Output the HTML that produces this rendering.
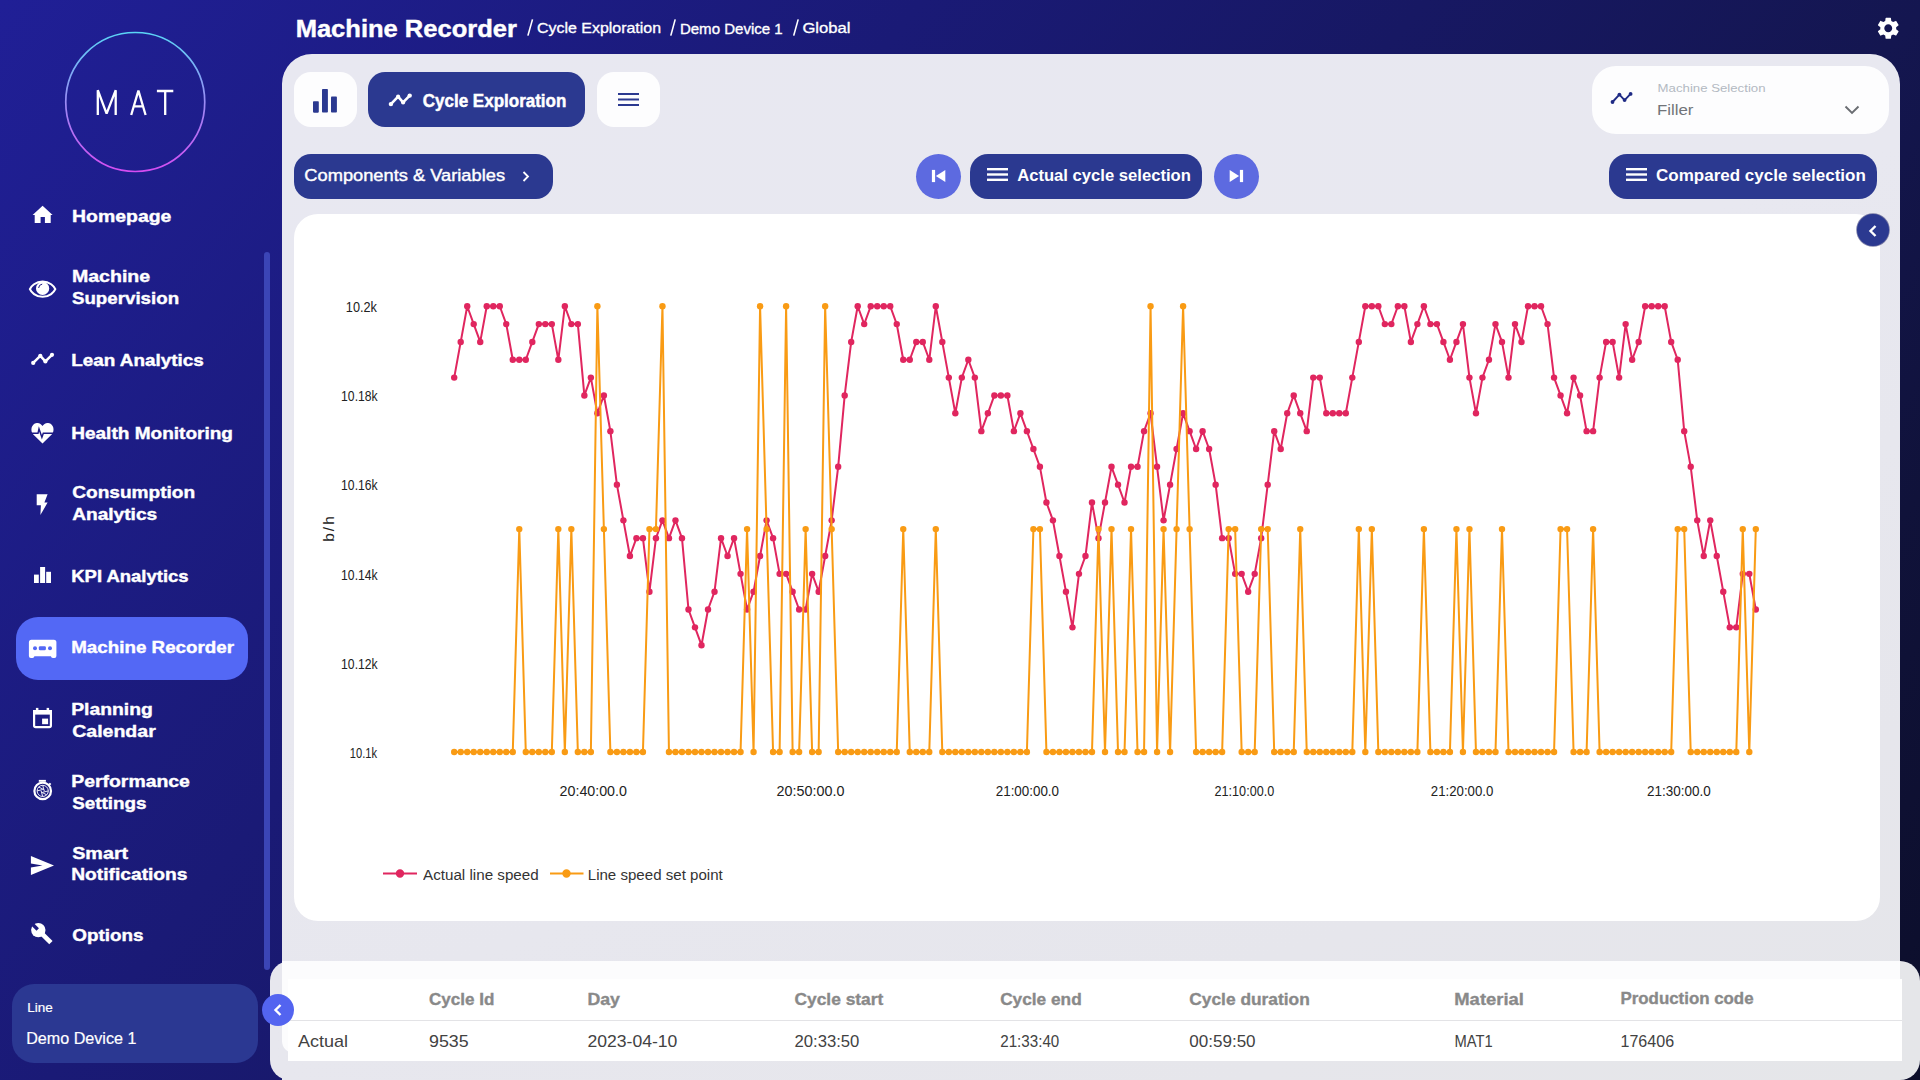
<!DOCTYPE html>
<html><head><meta charset="utf-8">
<style>
*{box-sizing:border-box;margin:0;padding:0}
html,body{width:1920px;height:1080px;overflow:hidden}
body{position:relative;font-family:"Liberation Sans",sans-serif;
background:linear-gradient(129deg,rgb(32,31,150) 0%,rgb(26,26,118) 33%,rgb(20,22,80) 69%,rgb(16,18,58) 83%,rgb(12,14,42) 100%);}
.abs{position:absolute}
.t{position:absolute;white-space:nowrap;line-height:1}
/* sidebar */
.logo{left:65px;top:32px;width:140px;height:140px}
.nav{color:#fff;font-weight:bold;font-size:17.5px;letter-spacing:0.35px}
.ico{position:absolute}
.active{left:16px;top:617px;width:232px;height:63px;border-radius:22px;background:#5368f5}
.scroll{left:264px;top:252px;width:6px;height:718px;border-radius:3px;background:#3b45b6}
.linebox{left:12px;top:984px;width:246px;height:79px;border-radius:22px;background:#2b3892}
/* header */
.title{left:297px;top:13px;color:#fff;font-weight:bold;font-size:23.5px;letter-spacing:0.2px}
.crumb{color:#fff;font-size:15px;top:20px}
/* main panel */
.panel{left:282px;top:54px;width:1618px;height:1100px;border-radius:30px 30px 0 0;background:linear-gradient(160deg,#e8e8f1 0%,#e8e8f0 40%,#e6e6ec 75%,#e5e6e9 100%)}
.wbtn{background:#fdfdfe;border-radius:17px}
.bbtn{background:#2b3990;border-radius:17px;color:#fff}
.circ{border-radius:50%;background:#5d6ae0}
.card{left:294px;top:214px;width:1586px;height:707px;border-radius:24px;background:#fff}
.ylab{color:#222;font-size:13.5px;text-align:right;width:60px}
.xlab{color:#222;font-size:13.5px;text-align:center;width:100px}
.chart{position:absolute;left:0;top:0}
.bottom{left:270px;top:961px;width:1650px;height:119px;border-radius:20px;background:linear-gradient(90deg,#e7e7ee 0%,#e6e6eb 60%,#e5e6e9 100%)}
.th{color:#898989;font-weight:bold;font-size:16px}
.td{color:#363636;font-size:16px}
</style></head>
<body>
<!-- SIDEBAR -->
<svg class="abs" style="left:0;top:0" width="300" height="1080" viewBox="0 0 300 1080">
<defs><linearGradient id="lg" x1="0" y1="32" x2="0" y2="172" gradientUnits="userSpaceOnUse"><stop offset="0" stop-color="#5ad6f6"/><stop offset="0.5" stop-color="#9a8cf4"/><stop offset="1" stop-color="#d64cf2"/></linearGradient></defs>
<circle cx="135.25" cy="102" r="69.5" fill="none" stroke="url(#lg)" stroke-width="1.7"/>
<g fill="none" stroke="#fff" stroke-width="2.3" stroke-linejoin="miter" stroke-miterlimit="10">
<path d="M97.8 115 V90.2 L106.6 113.6 L115.7 90.2 V115" stroke-miterlimit="1.2"/>
<path d="M131.2 115 L138.4 90.6 L145.6 115 M134.2 106.3 H142.6" stroke-miterlimit="1.2"/>
<path d="M156.9 91 H173.3 M165.2 91 V115"/>
</g>
</svg>

<div class="abs active"></div>
<div class="abs scroll"></div>

<svg class="abs" style="left:0;top:0" width="70" height="1080" viewBox="0 0 70 1080">
<!-- home -->
<path d="M42.6 205.7 L52.6 214.9 H50.7 V223 H44.9 V216.9 H40.6 V223 H34.7 V214.9 H32.6 Z" fill="#fff"/>
<!-- eye -->
<path d="M42.6 281.6 C35.5 281.6 31.2 286.2 29.9 289.1 C31.2 292.1 35.5 296.8 42.6 296.8 C49.7 296.8 54 292.1 55.3 289.1 C54 286.2 49.7 281.6 42.6 281.6 Z" fill="none" stroke="#fff" stroke-width="2.1"/>
<circle cx="42.6" cy="288.4" r="6.6" fill="#fff"/>
<path d="M38.6 288 A4.3 4.3 0 0 1 42.2 284.1" fill="none" stroke="#1e1b86" stroke-width="1"/>
<!-- lean -->
<g fill="#fff"><polyline points="33.2,362.9 40.3,355.8 45.4,361.4 52,354.8" fill="none" stroke="#fff" stroke-width="2.5" stroke-linejoin="round"/>
<circle cx="33.2" cy="362.9" r="2.1"/><circle cx="40.3" cy="355.8" r="2.1"/><circle cx="45.4" cy="361.4" r="2.1"/><circle cx="52" cy="354.8" r="2.1"/></g>
<!-- heart -->
<path d="M42.5 443.4 L33.3 434.6 C30.2 431.5 30.8 423.8 36.8 423.1 C39.5 422.8 41.4 424.5 42.5 426 C43.6 424.5 45.5 422.8 48.2 423.1 C54.2 423.8 54.8 431.5 51.7 434.6 Z" fill="#fff"/>
<polyline points="30,433.3 38,433.3 39,428.9 41.9,437.2 43.3,433.3 55,433.3" fill="none" stroke="#1e1b84" stroke-width="1.5" stroke-linejoin="miter"/>
<!-- bolt -->
<path d="M36.7 494.2 H47.6 L44.4 502.6 H47.6 L40.4 515 L40.9 505.2 H36.7 Z" fill="#fff"/>
<!-- kpi -->
<g fill="#fff"><rect x="34" y="574.6" width="4.8" height="8.4"/><rect x="40.1" y="567" width="5" height="16"/><rect x="46.2" y="571.8" width="4.8" height="11.2"/></g>
<!-- cassette -->
<path d="M31.4 639.7 H53.9 A2.5 2.5 0 0 1 56.4 642.2 V656 A2 2 0 0 1 54.4 658 H52.9 A2 2 0 0 1 50.9 656.3 H34.4 A2 2 0 0 1 32.4 658 H30.9 A2 2 0 0 1 28.9 656 V642.2 A2.5 2.5 0 0 1 31.4 639.7 Z" fill="#fff"/>
<g fill="#5368f5"><circle cx="35" cy="648.3" r="2"/><rect x="38.8" y="646.3" width="7.1" height="4" rx="1.3"/><circle cx="50" cy="648.3" r="2"/></g>
<!-- calendar -->
<rect x="34.1" y="711.2" width="16.8" height="16" rx="1.6" fill="none" stroke="#fff" stroke-width="2.2"/>
<rect x="33" y="710" width="19" height="4.6" fill="#fff"/>
<rect x="35.9" y="707.9" width="2.5" height="3" fill="#fff"/><rect x="46.6" y="707.9" width="2.5" height="3" fill="#fff"/>
<rect x="42.1" y="718.6" width="6" height="5.6" fill="#fff"/>
<!-- stopwatch -->
<rect x="38.8" y="779.9" width="7.1" height="1.9" fill="#fff"/>
<circle cx="42.7" cy="790.9" r="8.3" fill="none" stroke="#fff" stroke-width="2.2"/>
<path d="M49.2 784.8 L50.6 783.4" stroke="#fff" stroke-width="2"/>
<circle cx="42.7" cy="790.9" r="5.6" fill="none" stroke="#fff" stroke-width="0.9"/>
<g stroke="#fff" stroke-width="0.9"><path d="M42.7 785.3 L44.3 791 M48.3 790.9 L42.7 792.3 M42.7 796.5 L41.1 790.8 M37.1 790.9 L42.7 789.5 M38.7 787 L43.8 789.6 M46.7 794.8 L41.6 792.2"/></g>
<!-- send -->
<path d="M30.9 856 L54 865.5 L30.9 874.9 L30.9 867.4 L42.5 865.5 L30.9 863.6 Z" fill="#fff"/>
<!-- wrench -->
<line x1="38.3" y1="930.1" x2="50.9" y2="942.7" stroke="#fff" stroke-width="4.7"/>
<circle cx="38.3" cy="930.1" r="7.2" fill="#fff"/>
<g transform="translate(38.3 930.1) rotate(45)"><rect x="-9" y="-1.7" width="8.2" height="3.4" fill="#1d1a80"/></g>
</svg>

<div class="abs linebox"></div>

<!-- HEADER -->
<svg class="abs" style="left:0;top:0" width="900" height="50" viewBox="0 0 900 50"><g stroke="#fff" stroke-width="1.6" stroke-linecap="butt"><line x1="527.9" y1="35.6" x2="532.5" y2="19.4"/><line x1="670.8" y1="35.6" x2="675.2" y2="19.4"/><line x1="793.7" y1="35.6" x2="798.2" y2="19.4"/></g></svg>
<svg class="abs" style="left:1875.2px;top:15.1px" width="26.5" height="26.5" viewBox="0 0 24 24"><path fill="#fff" d="M19.14 12.94c.04-.3.06-.61.06-.94 0-.32-.02-.64-.07-.94l2.03-1.58a.49.49 0 0 0 .12-.61l-1.92-3.32a.488.488 0 0 0-.59-.22l-2.39.96c-.5-.38-1.03-.7-1.62-.94l-.36-2.54a.484.484 0 0 0-.48-.41h-3.84c-.24 0-.43.17-.47.41l-.36 2.54c-.59.24-1.13.57-1.62.94l-2.39-.96c-.22-.08-.47 0-.59.22L2.74 8.87c-.12.21-.08.47.12.61l2.03 1.58c-.05.3-.09.63-.09.94s.02.64.07.94l-2.03 1.58a.49.49 0 0 0-.12.61l1.92 3.32c.12.22.37.29.59.22l2.39-.96c.5.38 1.03.7 1.62.94l.36 2.54c.05.24.24.41.48.41h3.84c.24 0 .44-.17.47-.41l.36-2.54c.59-.24 1.13-.56 1.62-.94l2.39.96c.22.08.47 0 .59-.22l1.92-3.32c.12-.22.07-.47-.12-.61l-2.01-1.58zM12 15.6c-1.98 0-3.6-1.62-3.6-3.6s1.62-3.6 3.6-3.6 3.6 1.62 3.6 3.6-1.62 3.6-3.6 3.6z"/></svg>

<!-- MAIN PANEL -->
<div class="abs panel"></div>

<div class="abs wbtn" style="left:294px;top:72px;width:63px;height:55px"></div>
<svg class="abs" style="left:0;top:0" width="700" height="130" viewBox="0 0 700 130"><g fill="#2b3990"><rect x="313" y="101.25" width="5.8" height="11.4" rx="0.8"/><rect x="322" y="89" width="5.9" height="23.6" rx="0.8"/><rect x="331" y="96.6" width="5.9" height="16" rx="0.8"/></g></svg>
<div class="abs bbtn" style="left:368px;top:72px;width:217px;height:55px"></div>
<svg class="abs" style="left:0;top:0" width="700" height="130" viewBox="0 0 700 130"><g fill="#fff"><polyline points="390.9,104.1 398.1,96.6 403.1,102.4 409.7,95.6" fill="none" stroke="#fff" stroke-width="2.6" stroke-linejoin="round"/><circle cx="390.9" cy="104.1" r="2.2"/><circle cx="398.1" cy="96.6" r="2.1"/><circle cx="403.1" cy="102.4" r="2.1"/><circle cx="409.7" cy="95.6" r="2.2"/></g></svg>
<div class="abs wbtn" style="left:597px;top:72px;width:63px;height:55px"></div>
<svg class="abs" style="left:618px;top:93px" width="21" height="13" viewBox="0 0 21 13"><rect x="0" y="0" width="21" height="2" fill="#2b3990"/><rect x="0" y="5.5" width="21" height="2" fill="#2b3990"/><rect x="0" y="11" width="21" height="2" fill="#2b3990"/></svg>

<div class="abs bbtn" style="left:294px;top:154px;width:259px;height:45px"></div>
<svg class="abs" style="left:522px;top:171px" width="8" height="11" viewBox="0 0 8 11"><polyline points="1.5,1 6,5.5 1.5,10" fill="none" stroke="#fff" stroke-width="1.8"/></svg>

<div class="abs circ" style="left:916px;top:154px;width:45px;height:45px"></div>
<svg class="abs" style="left:900px;top:150px" width="50" height="50" viewBox="900 150 50 50"><rect x="931.9" y="169.9" width="3.2" height="12.2" fill="#fff"/><path d="M945.3 169.9 V182.1 L935.9 176 Z" fill="#fff"/></svg>
<div class="abs bbtn" style="left:970px;top:154px;width:232px;height:45px;border-radius:18px"></div>
<svg class="abs" style="left:987px;top:168px" width="21" height="13" viewBox="0 0 21 13"><rect x="0" y="0" width="21" height="2.4" fill="#fff"/><rect x="0" y="5.3" width="21" height="2.4" fill="#fff"/><rect x="0" y="10.6" width="21" height="2.4" fill="#fff"/></svg>
<div class="abs circ" style="left:1214px;top:154px;width:45px;height:45px"></div>
<svg class="abs" style="left:1200px;top:150px" width="50" height="50" viewBox="1200 150 50 50"><path d="M1229.7 169.9 V182.1 L1239.1 176 Z" fill="#fff"/><rect x="1239.9" y="169.9" width="3.2" height="12.2" fill="#fff"/></svg>

<div class="abs wbtn" style="left:1592px;top:66px;width:297px;height:68px;border-radius:24px"></div>
<svg class="abs" style="left:1600px;top:80px" width="40" height="30" viewBox="1600 80 40 30"><g fill="#1f2b85"><polyline points="1612.5,102 1619.4,94.6 1624.6,100.1 1630.6,93.9" fill="none" stroke="#1f2b85" stroke-width="1.9" stroke-linejoin="round"/><circle cx="1612.5" cy="102" r="1.9"/><circle cx="1619.4" cy="94.6" r="1.9"/><circle cx="1624.6" cy="100.1" r="1.9"/><circle cx="1630.6" cy="93.9" r="1.9"/></g></svg>
<svg class="abs" style="left:1844px;top:104px" width="16" height="11" viewBox="0 0 16 11"><polyline points="1.5,2.5 8,9 14.5,2.5" fill="none" stroke="#6a6d72" stroke-width="1.9"/></svg>

<div class="abs bbtn" style="left:1609px;top:154px;width:268px;height:45px;border-radius:18px"></div>
<svg class="abs" style="left:1626px;top:168px" width="21" height="13" viewBox="0 0 21 13"><rect x="0" y="0" width="21" height="2.4" fill="#fff"/><rect x="0" y="5.3" width="21" height="2.4" fill="#fff"/><rect x="0" y="10.6" width="21" height="2.4" fill="#fff"/></svg>

<!-- CHART CARD -->
<div class="abs card"></div>
<div class="abs" style="left:1857px;top:214px;width:32px;height:32px;border-radius:50%;background:#2b3990;box-shadow:0 0 0 0.8px rgba(25,30,100,0.55)"></div>
<svg class="abs" style="left:1867px;top:224px" width="12" height="14" viewBox="0 0 12 14"><polyline points="8.5,2 3.5,7 8.5,12" fill="none" stroke="#fff" stroke-width="2.4"/></svg>




<svg class="chart" width="1920" height="1080" viewBox="0 0 1920 1080">
<g fill="none" stroke="#e0265f" stroke-width="2" stroke-linejoin="round"><polyline points="454.20,377.61 460.71,341.93 467.22,306.25 473.72,324.09 480.23,341.93 486.74,306.25 493.25,306.25 499.76,306.25 506.26,324.09 512.77,359.77 519.28,359.77 525.79,359.77 532.30,341.93 538.80,324.09 545.31,324.09 551.82,324.09 558.33,359.77 564.84,306.25 571.34,324.09 577.85,324.09 584.36,395.45 590.87,377.61 597.38,413.29 603.88,395.45 610.39,431.13 616.90,484.65 623.41,520.33 629.92,556.01 636.42,538.17 642.93,538.17 649.44,591.69 655.95,538.17 662.46,520.33 668.96,538.17 675.47,520.33 681.98,538.17 688.49,609.53 695.00,627.37 701.50,645.21 708.01,609.53 714.52,591.69 721.03,538.17 727.54,556.01 734.04,538.17 740.55,573.85 747.06,609.53 753.57,591.69 760.08,556.01 766.58,520.33 773.09,538.17 779.60,573.85 786.11,573.85 792.62,591.69 799.12,609.53 805.63,609.53 812.14,573.85 818.65,591.69 825.16,556.01 831.66,520.33 838.17,466.81 844.68,395.45 851.19,341.93 857.70,306.25 864.20,324.09 870.71,306.25 877.22,306.25 883.73,306.25 890.24,306.25 896.74,324.09 903.25,359.77 909.76,359.77 916.27,341.93 922.78,341.93 929.28,359.77 935.79,306.25 942.30,341.93 948.81,377.61 955.32,413.29 961.82,377.61 968.33,359.77 974.84,377.61 981.35,431.13 987.86,413.29 994.36,395.45 1000.87,395.45 1007.38,395.45 1013.89,431.13 1020.40,413.29 1026.90,431.13 1033.41,448.97 1039.92,466.81 1046.43,502.49 1052.94,520.33 1059.44,556.01 1065.95,591.69 1072.46,627.37 1078.97,573.85 1085.48,556.01 1091.98,502.49 1098.49,538.17 1105.00,502.49 1111.51,466.81 1118.02,484.65 1124.52,502.49 1131.03,466.81 1137.54,466.81 1144.05,431.13 1150.56,413.29 1157.06,466.81 1163.57,520.33 1170.08,484.65 1176.59,448.97 1183.10,413.29 1189.60,431.13 1196.11,448.97 1202.62,431.13 1209.13,448.97 1215.64,484.65 1222.14,538.17 1228.65,538.17 1235.16,573.85 1241.67,573.85 1248.18,591.69 1254.68,573.85 1261.19,538.17 1267.70,484.65 1274.21,431.13 1280.72,448.97 1287.22,413.29 1293.73,395.45 1300.24,413.29 1306.75,431.13 1313.26,377.61 1319.76,377.61 1326.27,413.29 1332.78,413.29 1339.29,413.29 1345.80,413.29 1352.30,377.61 1358.81,341.93 1365.32,306.25 1371.83,306.25 1378.34,306.25 1384.84,324.09 1391.35,324.09 1397.86,306.25 1404.37,306.25 1410.88,341.93 1417.38,324.09 1423.89,306.25 1430.40,324.09 1436.91,324.09 1443.42,341.93 1449.92,359.77 1456.43,341.93 1462.94,324.09 1469.45,377.61 1475.96,413.29 1482.46,377.61 1488.97,359.77 1495.48,324.09 1501.99,341.93 1508.50,377.61 1515.00,324.09 1521.51,341.93 1528.02,306.25 1534.53,306.25 1541.04,306.25 1547.54,324.09 1554.05,377.61 1560.56,395.45 1567.07,413.29 1573.58,377.61 1580.08,395.45 1586.59,431.13 1593.10,431.13 1599.61,377.61 1606.12,341.93 1612.62,341.93 1619.13,377.61 1625.64,324.09 1632.15,359.77 1638.66,341.93 1645.16,306.25 1651.67,306.25 1658.18,306.25 1664.69,306.25 1671.20,341.93 1677.70,359.77 1684.21,431.13 1690.72,466.81 1697.23,520.33 1703.74,556.01 1710.24,520.33 1716.75,556.01 1723.26,591.69 1729.77,627.37 1736.28,627.37 1742.78,573.85 1749.29,573.85 1755.80,609.53"/></g>
<g fill="#e0265f"><circle cx="454.20" cy="377.61" r="3.2"/><circle cx="460.71" cy="341.93" r="3.2"/><circle cx="467.22" cy="306.25" r="3.2"/><circle cx="473.72" cy="324.09" r="3.2"/><circle cx="480.23" cy="341.93" r="3.2"/><circle cx="486.74" cy="306.25" r="3.2"/><circle cx="493.25" cy="306.25" r="3.2"/><circle cx="499.76" cy="306.25" r="3.2"/><circle cx="506.26" cy="324.09" r="3.2"/><circle cx="512.77" cy="359.77" r="3.2"/><circle cx="519.28" cy="359.77" r="3.2"/><circle cx="525.79" cy="359.77" r="3.2"/><circle cx="532.30" cy="341.93" r="3.2"/><circle cx="538.80" cy="324.09" r="3.2"/><circle cx="545.31" cy="324.09" r="3.2"/><circle cx="551.82" cy="324.09" r="3.2"/><circle cx="558.33" cy="359.77" r="3.2"/><circle cx="564.84" cy="306.25" r="3.2"/><circle cx="571.34" cy="324.09" r="3.2"/><circle cx="577.85" cy="324.09" r="3.2"/><circle cx="584.36" cy="395.45" r="3.2"/><circle cx="590.87" cy="377.61" r="3.2"/><circle cx="597.38" cy="413.29" r="3.2"/><circle cx="603.88" cy="395.45" r="3.2"/><circle cx="610.39" cy="431.13" r="3.2"/><circle cx="616.90" cy="484.65" r="3.2"/><circle cx="623.41" cy="520.33" r="3.2"/><circle cx="629.92" cy="556.01" r="3.2"/><circle cx="636.42" cy="538.17" r="3.2"/><circle cx="642.93" cy="538.17" r="3.2"/><circle cx="649.44" cy="591.69" r="3.2"/><circle cx="655.95" cy="538.17" r="3.2"/><circle cx="662.46" cy="520.33" r="3.2"/><circle cx="668.96" cy="538.17" r="3.2"/><circle cx="675.47" cy="520.33" r="3.2"/><circle cx="681.98" cy="538.17" r="3.2"/><circle cx="688.49" cy="609.53" r="3.2"/><circle cx="695.00" cy="627.37" r="3.2"/><circle cx="701.50" cy="645.21" r="3.2"/><circle cx="708.01" cy="609.53" r="3.2"/><circle cx="714.52" cy="591.69" r="3.2"/><circle cx="721.03" cy="538.17" r="3.2"/><circle cx="727.54" cy="556.01" r="3.2"/><circle cx="734.04" cy="538.17" r="3.2"/><circle cx="740.55" cy="573.85" r="3.2"/><circle cx="747.06" cy="609.53" r="3.2"/><circle cx="753.57" cy="591.69" r="3.2"/><circle cx="760.08" cy="556.01" r="3.2"/><circle cx="766.58" cy="520.33" r="3.2"/><circle cx="773.09" cy="538.17" r="3.2"/><circle cx="779.60" cy="573.85" r="3.2"/><circle cx="786.11" cy="573.85" r="3.2"/><circle cx="792.62" cy="591.69" r="3.2"/><circle cx="799.12" cy="609.53" r="3.2"/><circle cx="805.63" cy="609.53" r="3.2"/><circle cx="812.14" cy="573.85" r="3.2"/><circle cx="818.65" cy="591.69" r="3.2"/><circle cx="825.16" cy="556.01" r="3.2"/><circle cx="831.66" cy="520.33" r="3.2"/><circle cx="838.17" cy="466.81" r="3.2"/><circle cx="844.68" cy="395.45" r="3.2"/><circle cx="851.19" cy="341.93" r="3.2"/><circle cx="857.70" cy="306.25" r="3.2"/><circle cx="864.20" cy="324.09" r="3.2"/><circle cx="870.71" cy="306.25" r="3.2"/><circle cx="877.22" cy="306.25" r="3.2"/><circle cx="883.73" cy="306.25" r="3.2"/><circle cx="890.24" cy="306.25" r="3.2"/><circle cx="896.74" cy="324.09" r="3.2"/><circle cx="903.25" cy="359.77" r="3.2"/><circle cx="909.76" cy="359.77" r="3.2"/><circle cx="916.27" cy="341.93" r="3.2"/><circle cx="922.78" cy="341.93" r="3.2"/><circle cx="929.28" cy="359.77" r="3.2"/><circle cx="935.79" cy="306.25" r="3.2"/><circle cx="942.30" cy="341.93" r="3.2"/><circle cx="948.81" cy="377.61" r="3.2"/><circle cx="955.32" cy="413.29" r="3.2"/><circle cx="961.82" cy="377.61" r="3.2"/><circle cx="968.33" cy="359.77" r="3.2"/><circle cx="974.84" cy="377.61" r="3.2"/><circle cx="981.35" cy="431.13" r="3.2"/><circle cx="987.86" cy="413.29" r="3.2"/><circle cx="994.36" cy="395.45" r="3.2"/><circle cx="1000.87" cy="395.45" r="3.2"/><circle cx="1007.38" cy="395.45" r="3.2"/><circle cx="1013.89" cy="431.13" r="3.2"/><circle cx="1020.40" cy="413.29" r="3.2"/><circle cx="1026.90" cy="431.13" r="3.2"/><circle cx="1033.41" cy="448.97" r="3.2"/><circle cx="1039.92" cy="466.81" r="3.2"/><circle cx="1046.43" cy="502.49" r="3.2"/><circle cx="1052.94" cy="520.33" r="3.2"/><circle cx="1059.44" cy="556.01" r="3.2"/><circle cx="1065.95" cy="591.69" r="3.2"/><circle cx="1072.46" cy="627.37" r="3.2"/><circle cx="1078.97" cy="573.85" r="3.2"/><circle cx="1085.48" cy="556.01" r="3.2"/><circle cx="1091.98" cy="502.49" r="3.2"/><circle cx="1098.49" cy="538.17" r="3.2"/><circle cx="1105.00" cy="502.49" r="3.2"/><circle cx="1111.51" cy="466.81" r="3.2"/><circle cx="1118.02" cy="484.65" r="3.2"/><circle cx="1124.52" cy="502.49" r="3.2"/><circle cx="1131.03" cy="466.81" r="3.2"/><circle cx="1137.54" cy="466.81" r="3.2"/><circle cx="1144.05" cy="431.13" r="3.2"/><circle cx="1150.56" cy="413.29" r="3.2"/><circle cx="1157.06" cy="466.81" r="3.2"/><circle cx="1163.57" cy="520.33" r="3.2"/><circle cx="1170.08" cy="484.65" r="3.2"/><circle cx="1176.59" cy="448.97" r="3.2"/><circle cx="1183.10" cy="413.29" r="3.2"/><circle cx="1189.60" cy="431.13" r="3.2"/><circle cx="1196.11" cy="448.97" r="3.2"/><circle cx="1202.62" cy="431.13" r="3.2"/><circle cx="1209.13" cy="448.97" r="3.2"/><circle cx="1215.64" cy="484.65" r="3.2"/><circle cx="1222.14" cy="538.17" r="3.2"/><circle cx="1228.65" cy="538.17" r="3.2"/><circle cx="1235.16" cy="573.85" r="3.2"/><circle cx="1241.67" cy="573.85" r="3.2"/><circle cx="1248.18" cy="591.69" r="3.2"/><circle cx="1254.68" cy="573.85" r="3.2"/><circle cx="1261.19" cy="538.17" r="3.2"/><circle cx="1267.70" cy="484.65" r="3.2"/><circle cx="1274.21" cy="431.13" r="3.2"/><circle cx="1280.72" cy="448.97" r="3.2"/><circle cx="1287.22" cy="413.29" r="3.2"/><circle cx="1293.73" cy="395.45" r="3.2"/><circle cx="1300.24" cy="413.29" r="3.2"/><circle cx="1306.75" cy="431.13" r="3.2"/><circle cx="1313.26" cy="377.61" r="3.2"/><circle cx="1319.76" cy="377.61" r="3.2"/><circle cx="1326.27" cy="413.29" r="3.2"/><circle cx="1332.78" cy="413.29" r="3.2"/><circle cx="1339.29" cy="413.29" r="3.2"/><circle cx="1345.80" cy="413.29" r="3.2"/><circle cx="1352.30" cy="377.61" r="3.2"/><circle cx="1358.81" cy="341.93" r="3.2"/><circle cx="1365.32" cy="306.25" r="3.2"/><circle cx="1371.83" cy="306.25" r="3.2"/><circle cx="1378.34" cy="306.25" r="3.2"/><circle cx="1384.84" cy="324.09" r="3.2"/><circle cx="1391.35" cy="324.09" r="3.2"/><circle cx="1397.86" cy="306.25" r="3.2"/><circle cx="1404.37" cy="306.25" r="3.2"/><circle cx="1410.88" cy="341.93" r="3.2"/><circle cx="1417.38" cy="324.09" r="3.2"/><circle cx="1423.89" cy="306.25" r="3.2"/><circle cx="1430.40" cy="324.09" r="3.2"/><circle cx="1436.91" cy="324.09" r="3.2"/><circle cx="1443.42" cy="341.93" r="3.2"/><circle cx="1449.92" cy="359.77" r="3.2"/><circle cx="1456.43" cy="341.93" r="3.2"/><circle cx="1462.94" cy="324.09" r="3.2"/><circle cx="1469.45" cy="377.61" r="3.2"/><circle cx="1475.96" cy="413.29" r="3.2"/><circle cx="1482.46" cy="377.61" r="3.2"/><circle cx="1488.97" cy="359.77" r="3.2"/><circle cx="1495.48" cy="324.09" r="3.2"/><circle cx="1501.99" cy="341.93" r="3.2"/><circle cx="1508.50" cy="377.61" r="3.2"/><circle cx="1515.00" cy="324.09" r="3.2"/><circle cx="1521.51" cy="341.93" r="3.2"/><circle cx="1528.02" cy="306.25" r="3.2"/><circle cx="1534.53" cy="306.25" r="3.2"/><circle cx="1541.04" cy="306.25" r="3.2"/><circle cx="1547.54" cy="324.09" r="3.2"/><circle cx="1554.05" cy="377.61" r="3.2"/><circle cx="1560.56" cy="395.45" r="3.2"/><circle cx="1567.07" cy="413.29" r="3.2"/><circle cx="1573.58" cy="377.61" r="3.2"/><circle cx="1580.08" cy="395.45" r="3.2"/><circle cx="1586.59" cy="431.13" r="3.2"/><circle cx="1593.10" cy="431.13" r="3.2"/><circle cx="1599.61" cy="377.61" r="3.2"/><circle cx="1606.12" cy="341.93" r="3.2"/><circle cx="1612.62" cy="341.93" r="3.2"/><circle cx="1619.13" cy="377.61" r="3.2"/><circle cx="1625.64" cy="324.09" r="3.2"/><circle cx="1632.15" cy="359.77" r="3.2"/><circle cx="1638.66" cy="341.93" r="3.2"/><circle cx="1645.16" cy="306.25" r="3.2"/><circle cx="1651.67" cy="306.25" r="3.2"/><circle cx="1658.18" cy="306.25" r="3.2"/><circle cx="1664.69" cy="306.25" r="3.2"/><circle cx="1671.20" cy="341.93" r="3.2"/><circle cx="1677.70" cy="359.77" r="3.2"/><circle cx="1684.21" cy="431.13" r="3.2"/><circle cx="1690.72" cy="466.81" r="3.2"/><circle cx="1697.23" cy="520.33" r="3.2"/><circle cx="1703.74" cy="556.01" r="3.2"/><circle cx="1710.24" cy="520.33" r="3.2"/><circle cx="1716.75" cy="556.01" r="3.2"/><circle cx="1723.26" cy="591.69" r="3.2"/><circle cx="1729.77" cy="627.37" r="3.2"/><circle cx="1736.28" cy="627.37" r="3.2"/><circle cx="1742.78" cy="573.85" r="3.2"/><circle cx="1749.29" cy="573.85" r="3.2"/><circle cx="1755.80" cy="609.53" r="3.2"/></g>
<g fill="none" stroke="#f99b14" stroke-width="2" stroke-linejoin="round"><polyline points="454.20,752.00 460.71,752.00 467.22,752.00 473.72,752.00 480.23,752.00 486.74,752.00 493.25,752.00 499.76,752.00 506.26,752.00 512.77,752.00 519.28,529.10 525.79,752.00 532.30,752.00 538.80,752.00 545.31,752.00 551.82,752.00 558.33,529.10 564.84,752.00 571.34,529.10 577.85,752.00 584.36,752.00 590.87,752.00 597.38,306.25 603.88,529.10 610.39,752.00 616.90,752.00 623.41,752.00 629.92,752.00 636.42,752.00 642.93,752.00 649.44,529.10 655.95,529.10 662.46,306.25 668.96,752.00 675.47,752.00 681.98,752.00 688.49,752.00 695.00,752.00 701.50,752.00 708.01,752.00 714.52,752.00 721.03,752.00 727.54,752.00 734.04,752.00 740.55,752.00 747.06,529.10 753.57,752.00 760.08,306.25 766.58,529.10 773.09,752.00 779.60,752.00 786.11,306.25 792.62,752.00 799.12,752.00 805.63,529.10 812.14,752.00 818.65,752.00 825.16,306.25 831.66,529.10 838.17,752.00 844.68,752.00 851.19,752.00 857.70,752.00 864.20,752.00 870.71,752.00 877.22,752.00 883.73,752.00 890.24,752.00 896.74,752.00 903.25,529.10 909.76,752.00 916.27,752.00 922.78,752.00 929.28,752.00 935.79,529.10 942.30,752.00 948.81,752.00 955.32,752.00 961.82,752.00 968.33,752.00 974.84,752.00 981.35,752.00 987.86,752.00 994.36,752.00 1000.87,752.00 1007.38,752.00 1013.89,752.00 1020.40,752.00 1026.90,752.00 1033.41,529.10 1039.92,529.10 1046.43,752.00 1052.94,752.00 1059.44,752.00 1065.95,752.00 1072.46,752.00 1078.97,752.00 1085.48,752.00 1091.98,752.00 1098.49,529.10 1105.00,752.00 1111.51,529.10 1118.02,752.00 1124.52,752.00 1131.03,529.10 1137.54,752.00 1144.05,752.00 1150.56,306.25 1157.06,752.00 1163.57,529.10 1170.08,752.00 1176.59,529.10 1183.10,306.25 1189.60,529.10 1196.11,752.00 1202.62,752.00 1209.13,752.00 1215.64,752.00 1222.14,752.00 1228.65,529.10 1235.16,529.10 1241.67,752.00 1248.18,752.00 1254.68,752.00 1261.19,529.10 1267.70,529.10 1274.21,752.00 1280.72,752.00 1287.22,752.00 1293.73,752.00 1300.24,529.10 1306.75,752.00 1313.26,752.00 1319.76,752.00 1326.27,752.00 1332.78,752.00 1339.29,752.00 1345.80,752.00 1352.30,752.00 1358.81,529.10 1365.32,752.00 1371.83,529.10 1378.34,752.00 1384.84,752.00 1391.35,752.00 1397.86,752.00 1404.37,752.00 1410.88,752.00 1417.38,752.00 1423.89,529.10 1430.40,752.00 1436.91,752.00 1443.42,752.00 1449.92,752.00 1456.43,529.10 1462.94,752.00 1469.45,529.10 1475.96,752.00 1482.46,752.00 1488.97,752.00 1495.48,752.00 1501.99,529.10 1508.50,752.00 1515.00,752.00 1521.51,752.00 1528.02,752.00 1534.53,752.00 1541.04,752.00 1547.54,752.00 1554.05,752.00 1560.56,529.10 1567.07,529.10 1573.58,752.00 1580.08,752.00 1586.59,752.00 1593.10,529.10 1599.61,752.00 1606.12,752.00 1612.62,752.00 1619.13,752.00 1625.64,752.00 1632.15,752.00 1638.66,752.00 1645.16,752.00 1651.67,752.00 1658.18,752.00 1664.69,752.00 1671.20,752.00 1677.70,529.10 1684.21,529.10 1690.72,752.00 1697.23,752.00 1703.74,752.00 1710.24,752.00 1716.75,752.00 1723.26,752.00 1729.77,752.00 1736.28,752.00 1742.78,529.10 1749.29,752.00 1755.80,529.10"/></g>
<g fill="#f99b14"><circle cx="454.20" cy="752.00" r="3.2"/><circle cx="460.71" cy="752.00" r="3.2"/><circle cx="467.22" cy="752.00" r="3.2"/><circle cx="473.72" cy="752.00" r="3.2"/><circle cx="480.23" cy="752.00" r="3.2"/><circle cx="486.74" cy="752.00" r="3.2"/><circle cx="493.25" cy="752.00" r="3.2"/><circle cx="499.76" cy="752.00" r="3.2"/><circle cx="506.26" cy="752.00" r="3.2"/><circle cx="512.77" cy="752.00" r="3.2"/><circle cx="519.28" cy="529.10" r="3.2"/><circle cx="525.79" cy="752.00" r="3.2"/><circle cx="532.30" cy="752.00" r="3.2"/><circle cx="538.80" cy="752.00" r="3.2"/><circle cx="545.31" cy="752.00" r="3.2"/><circle cx="551.82" cy="752.00" r="3.2"/><circle cx="558.33" cy="529.10" r="3.2"/><circle cx="564.84" cy="752.00" r="3.2"/><circle cx="571.34" cy="529.10" r="3.2"/><circle cx="577.85" cy="752.00" r="3.2"/><circle cx="584.36" cy="752.00" r="3.2"/><circle cx="590.87" cy="752.00" r="3.2"/><circle cx="597.38" cy="306.25" r="3.2"/><circle cx="603.88" cy="529.10" r="3.2"/><circle cx="610.39" cy="752.00" r="3.2"/><circle cx="616.90" cy="752.00" r="3.2"/><circle cx="623.41" cy="752.00" r="3.2"/><circle cx="629.92" cy="752.00" r="3.2"/><circle cx="636.42" cy="752.00" r="3.2"/><circle cx="642.93" cy="752.00" r="3.2"/><circle cx="649.44" cy="529.10" r="3.2"/><circle cx="655.95" cy="529.10" r="3.2"/><circle cx="662.46" cy="306.25" r="3.2"/><circle cx="668.96" cy="752.00" r="3.2"/><circle cx="675.47" cy="752.00" r="3.2"/><circle cx="681.98" cy="752.00" r="3.2"/><circle cx="688.49" cy="752.00" r="3.2"/><circle cx="695.00" cy="752.00" r="3.2"/><circle cx="701.50" cy="752.00" r="3.2"/><circle cx="708.01" cy="752.00" r="3.2"/><circle cx="714.52" cy="752.00" r="3.2"/><circle cx="721.03" cy="752.00" r="3.2"/><circle cx="727.54" cy="752.00" r="3.2"/><circle cx="734.04" cy="752.00" r="3.2"/><circle cx="740.55" cy="752.00" r="3.2"/><circle cx="747.06" cy="529.10" r="3.2"/><circle cx="753.57" cy="752.00" r="3.2"/><circle cx="760.08" cy="306.25" r="3.2"/><circle cx="766.58" cy="529.10" r="3.2"/><circle cx="773.09" cy="752.00" r="3.2"/><circle cx="779.60" cy="752.00" r="3.2"/><circle cx="786.11" cy="306.25" r="3.2"/><circle cx="792.62" cy="752.00" r="3.2"/><circle cx="799.12" cy="752.00" r="3.2"/><circle cx="805.63" cy="529.10" r="3.2"/><circle cx="812.14" cy="752.00" r="3.2"/><circle cx="818.65" cy="752.00" r="3.2"/><circle cx="825.16" cy="306.25" r="3.2"/><circle cx="831.66" cy="529.10" r="3.2"/><circle cx="838.17" cy="752.00" r="3.2"/><circle cx="844.68" cy="752.00" r="3.2"/><circle cx="851.19" cy="752.00" r="3.2"/><circle cx="857.70" cy="752.00" r="3.2"/><circle cx="864.20" cy="752.00" r="3.2"/><circle cx="870.71" cy="752.00" r="3.2"/><circle cx="877.22" cy="752.00" r="3.2"/><circle cx="883.73" cy="752.00" r="3.2"/><circle cx="890.24" cy="752.00" r="3.2"/><circle cx="896.74" cy="752.00" r="3.2"/><circle cx="903.25" cy="529.10" r="3.2"/><circle cx="909.76" cy="752.00" r="3.2"/><circle cx="916.27" cy="752.00" r="3.2"/><circle cx="922.78" cy="752.00" r="3.2"/><circle cx="929.28" cy="752.00" r="3.2"/><circle cx="935.79" cy="529.10" r="3.2"/><circle cx="942.30" cy="752.00" r="3.2"/><circle cx="948.81" cy="752.00" r="3.2"/><circle cx="955.32" cy="752.00" r="3.2"/><circle cx="961.82" cy="752.00" r="3.2"/><circle cx="968.33" cy="752.00" r="3.2"/><circle cx="974.84" cy="752.00" r="3.2"/><circle cx="981.35" cy="752.00" r="3.2"/><circle cx="987.86" cy="752.00" r="3.2"/><circle cx="994.36" cy="752.00" r="3.2"/><circle cx="1000.87" cy="752.00" r="3.2"/><circle cx="1007.38" cy="752.00" r="3.2"/><circle cx="1013.89" cy="752.00" r="3.2"/><circle cx="1020.40" cy="752.00" r="3.2"/><circle cx="1026.90" cy="752.00" r="3.2"/><circle cx="1033.41" cy="529.10" r="3.2"/><circle cx="1039.92" cy="529.10" r="3.2"/><circle cx="1046.43" cy="752.00" r="3.2"/><circle cx="1052.94" cy="752.00" r="3.2"/><circle cx="1059.44" cy="752.00" r="3.2"/><circle cx="1065.95" cy="752.00" r="3.2"/><circle cx="1072.46" cy="752.00" r="3.2"/><circle cx="1078.97" cy="752.00" r="3.2"/><circle cx="1085.48" cy="752.00" r="3.2"/><circle cx="1091.98" cy="752.00" r="3.2"/><circle cx="1098.49" cy="529.10" r="3.2"/><circle cx="1105.00" cy="752.00" r="3.2"/><circle cx="1111.51" cy="529.10" r="3.2"/><circle cx="1118.02" cy="752.00" r="3.2"/><circle cx="1124.52" cy="752.00" r="3.2"/><circle cx="1131.03" cy="529.10" r="3.2"/><circle cx="1137.54" cy="752.00" r="3.2"/><circle cx="1144.05" cy="752.00" r="3.2"/><circle cx="1150.56" cy="306.25" r="3.2"/><circle cx="1157.06" cy="752.00" r="3.2"/><circle cx="1163.57" cy="529.10" r="3.2"/><circle cx="1170.08" cy="752.00" r="3.2"/><circle cx="1176.59" cy="529.10" r="3.2"/><circle cx="1183.10" cy="306.25" r="3.2"/><circle cx="1189.60" cy="529.10" r="3.2"/><circle cx="1196.11" cy="752.00" r="3.2"/><circle cx="1202.62" cy="752.00" r="3.2"/><circle cx="1209.13" cy="752.00" r="3.2"/><circle cx="1215.64" cy="752.00" r="3.2"/><circle cx="1222.14" cy="752.00" r="3.2"/><circle cx="1228.65" cy="529.10" r="3.2"/><circle cx="1235.16" cy="529.10" r="3.2"/><circle cx="1241.67" cy="752.00" r="3.2"/><circle cx="1248.18" cy="752.00" r="3.2"/><circle cx="1254.68" cy="752.00" r="3.2"/><circle cx="1261.19" cy="529.10" r="3.2"/><circle cx="1267.70" cy="529.10" r="3.2"/><circle cx="1274.21" cy="752.00" r="3.2"/><circle cx="1280.72" cy="752.00" r="3.2"/><circle cx="1287.22" cy="752.00" r="3.2"/><circle cx="1293.73" cy="752.00" r="3.2"/><circle cx="1300.24" cy="529.10" r="3.2"/><circle cx="1306.75" cy="752.00" r="3.2"/><circle cx="1313.26" cy="752.00" r="3.2"/><circle cx="1319.76" cy="752.00" r="3.2"/><circle cx="1326.27" cy="752.00" r="3.2"/><circle cx="1332.78" cy="752.00" r="3.2"/><circle cx="1339.29" cy="752.00" r="3.2"/><circle cx="1345.80" cy="752.00" r="3.2"/><circle cx="1352.30" cy="752.00" r="3.2"/><circle cx="1358.81" cy="529.10" r="3.2"/><circle cx="1365.32" cy="752.00" r="3.2"/><circle cx="1371.83" cy="529.10" r="3.2"/><circle cx="1378.34" cy="752.00" r="3.2"/><circle cx="1384.84" cy="752.00" r="3.2"/><circle cx="1391.35" cy="752.00" r="3.2"/><circle cx="1397.86" cy="752.00" r="3.2"/><circle cx="1404.37" cy="752.00" r="3.2"/><circle cx="1410.88" cy="752.00" r="3.2"/><circle cx="1417.38" cy="752.00" r="3.2"/><circle cx="1423.89" cy="529.10" r="3.2"/><circle cx="1430.40" cy="752.00" r="3.2"/><circle cx="1436.91" cy="752.00" r="3.2"/><circle cx="1443.42" cy="752.00" r="3.2"/><circle cx="1449.92" cy="752.00" r="3.2"/><circle cx="1456.43" cy="529.10" r="3.2"/><circle cx="1462.94" cy="752.00" r="3.2"/><circle cx="1469.45" cy="529.10" r="3.2"/><circle cx="1475.96" cy="752.00" r="3.2"/><circle cx="1482.46" cy="752.00" r="3.2"/><circle cx="1488.97" cy="752.00" r="3.2"/><circle cx="1495.48" cy="752.00" r="3.2"/><circle cx="1501.99" cy="529.10" r="3.2"/><circle cx="1508.50" cy="752.00" r="3.2"/><circle cx="1515.00" cy="752.00" r="3.2"/><circle cx="1521.51" cy="752.00" r="3.2"/><circle cx="1528.02" cy="752.00" r="3.2"/><circle cx="1534.53" cy="752.00" r="3.2"/><circle cx="1541.04" cy="752.00" r="3.2"/><circle cx="1547.54" cy="752.00" r="3.2"/><circle cx="1554.05" cy="752.00" r="3.2"/><circle cx="1560.56" cy="529.10" r="3.2"/><circle cx="1567.07" cy="529.10" r="3.2"/><circle cx="1573.58" cy="752.00" r="3.2"/><circle cx="1580.08" cy="752.00" r="3.2"/><circle cx="1586.59" cy="752.00" r="3.2"/><circle cx="1593.10" cy="529.10" r="3.2"/><circle cx="1599.61" cy="752.00" r="3.2"/><circle cx="1606.12" cy="752.00" r="3.2"/><circle cx="1612.62" cy="752.00" r="3.2"/><circle cx="1619.13" cy="752.00" r="3.2"/><circle cx="1625.64" cy="752.00" r="3.2"/><circle cx="1632.15" cy="752.00" r="3.2"/><circle cx="1638.66" cy="752.00" r="3.2"/><circle cx="1645.16" cy="752.00" r="3.2"/><circle cx="1651.67" cy="752.00" r="3.2"/><circle cx="1658.18" cy="752.00" r="3.2"/><circle cx="1664.69" cy="752.00" r="3.2"/><circle cx="1671.20" cy="752.00" r="3.2"/><circle cx="1677.70" cy="529.10" r="3.2"/><circle cx="1684.21" cy="529.10" r="3.2"/><circle cx="1690.72" cy="752.00" r="3.2"/><circle cx="1697.23" cy="752.00" r="3.2"/><circle cx="1703.74" cy="752.00" r="3.2"/><circle cx="1710.24" cy="752.00" r="3.2"/><circle cx="1716.75" cy="752.00" r="3.2"/><circle cx="1723.26" cy="752.00" r="3.2"/><circle cx="1729.77" cy="752.00" r="3.2"/><circle cx="1736.28" cy="752.00" r="3.2"/><circle cx="1742.78" cy="529.10" r="3.2"/><circle cx="1749.29" cy="752.00" r="3.2"/><circle cx="1755.80" cy="529.10" r="3.2"/></g>
<g fill="#e0265f" stroke="#e0265f" stroke-width="2"><line x1="383" y1="873.5" x2="417" y2="873.5"/><circle cx="400" cy="873.5" r="3.2"/></g>
<g fill="#f99b14" stroke="#f99b14" stroke-width="2"><line x1="550" y1="873.5" x2="583.5" y2="873.5"/><circle cx="566.5" cy="873.5" r="3.2"/></g>
</svg>
<div class="abs" style="left:329.4px;top:529.4px;width:0;height:0"><div style="position:absolute;left:-25px;top:-9px;width:50px;height:18px;line-height:18px;text-align:center;transform:rotate(-90deg);font-size:15.5px;color:#222;letter-spacing:2px;text-indent:2px;white-space:nowrap">b/h</div></div>

<!-- BOTTOM TABLE -->
<div class="abs bottom"></div>
<div class="abs" style="left:282px;top:961px;width:1618px;height:92px;background:#fcfcfd;border-radius:0 0 0 12px"></div>
<div class="abs" style="left:288px;top:979px;width:1614px;height:82px;background:#fff"></div>
<div class="abs" style="left:288px;top:1020px;width:1614px;height:1px;background:#e3e3e6"></div>

<div class="abs" style="left:262px;top:994px;width:32px;height:32px;border-radius:50%;background:#5364f0"></div>
<svg class="abs" style="left:272px;top:1003px" width="12" height="14" viewBox="0 0 12 14"><polyline points="8.5,2 3.5,7 8.5,12" fill="none" stroke="#fff" stroke-width="2.4"/></svg>
<div class="t" id="title" style="left:295.63px;top:17.55px;font-size:25.543px;font-weight:bold;color:#fff;transform:scaleY(0.9083);transform-origin:0 0;-webkit-text-stroke:0.45px #fff">Machine Recorder</div>
<div class="t" id="cr1" style="left:537.05px;top:21.20px;font-size:15.953px;font-weight:normal;color:#fff;transform:scaleY(0.9277);transform-origin:0 0;-webkit-text-stroke:0.35px #fff">Cycle Exploration</div>
<div class="t" id="cr2" style="left:679.89px;top:20.90px;font-size:15.068px;font-weight:normal;color:#fff;transform:scaleY(0.9822);transform-origin:0 0;-webkit-text-stroke:0.35px #fff">Demo Device 1</div>
<div class="t" id="cr3" style="left:802.39px;top:20.90px;font-size:16.688px;font-weight:normal;color:#fff;transform:scaleY(0.8869);transform-origin:0 0;-webkit-text-stroke:0.35px #fff">Global</div>
<div class="t" id="n1" style="left:72.00px;top:207.64px;font-size:19.449px;font-weight:bold;color:#fff;transform:scaleY(0.8895);transform-origin:0 0;-webkit-text-stroke:0.45px #fff">Homepage</div>
<div class="t" id="n2" style="left:71.89px;top:268.24px;font-size:19.590px;font-weight:bold;color:#fff;transform:scaleY(0.8831);transform-origin:0 0;-webkit-text-stroke:0.45px #fff">Machine</div>
<div class="t" id="n3" style="left:71.93px;top:289.54px;font-size:18.727px;font-weight:bold;color:#fff;transform:scaleY(0.9238);transform-origin:0 0;-webkit-text-stroke:0.45px #fff">Supervision</div>
<div class="t" id="n4" style="left:71.23px;top:351.54px;font-size:18.871px;font-weight:bold;color:#fff;transform:scaleY(0.9168);transform-origin:0 0;-webkit-text-stroke:0.45px #fff">Lean Analytics</div>
<div class="t" id="n5" style="left:71.21px;top:424.04px;font-size:19.042px;font-weight:bold;color:#fff;transform:scaleY(0.9085);transform-origin:0 0;-webkit-text-stroke:0.45px #fff">Health Monitoring</div>
<div class="t" id="n6" style="left:72.23px;top:484.24px;font-size:19.093px;font-weight:bold;color:#fff;transform:scaleY(0.9061);transform-origin:0 0;-webkit-text-stroke:0.45px #fff">Consumption</div>
<div class="t" id="n7" style="left:72.21px;top:506.24px;font-size:19.125px;font-weight:bold;color:#fff;transform:scaleY(0.9046);transform-origin:0 0;-webkit-text-stroke:0.45px #fff">Analytics</div>
<div class="t" id="n8" style="left:71.26px;top:567.54px;font-size:18.486px;font-weight:bold;color:#fff;transform:scaleY(0.9358);transform-origin:0 0;-webkit-text-stroke:0.45px #fff">KPI Analytics</div>
<div class="t" id="n9" style="left:71.23px;top:639.44px;font-size:18.798px;font-weight:bold;color:#fff;transform:scaleY(0.9203);transform-origin:0 0;-webkit-text-stroke:0.45px #fff">Machine Recorder</div>
<div class="t" id="n10" style="left:71.18px;top:700.74px;font-size:19.352px;font-weight:bold;color:#fff;transform:scaleY(0.8939);transform-origin:0 0;-webkit-text-stroke:0.45px #fff">Planning</div>
<div class="t" id="n11" style="left:72.20px;top:722.94px;font-size:19.549px;font-weight:bold;color:#fff;transform:scaleY(0.8850);transform-origin:0 0;-webkit-text-stroke:0.45px #fff">Calendar</div>
<div class="t" id="n12" style="left:71.18px;top:773.24px;font-size:19.430px;font-weight:bold;color:#fff;transform:scaleY(0.8904);transform-origin:0 0;-webkit-text-stroke:0.45px #fff">Performance</div>
<div class="t" id="n13" style="left:72.22px;top:794.54px;font-size:18.856px;font-weight:bold;color:#fff;transform:scaleY(0.9175);transform-origin:0 0;-webkit-text-stroke:0.45px #fff">Settings</div>
<div class="t" id="n14" style="left:72.17px;top:844.94px;font-size:19.784px;font-weight:bold;color:#fff;transform:scaleY(0.8744);transform-origin:0 0;-webkit-text-stroke:0.45px #fff">Smart</div>
<div class="t" id="n15" style="left:71.23px;top:865.94px;font-size:19.215px;font-weight:bold;color:#fff;transform:scaleY(0.9003);transform-origin:0 0;-webkit-text-stroke:0.45px #fff">Notifications</div>
<div class="t" id="n16" style="left:72.22px;top:926.74px;font-size:18.877px;font-weight:bold;color:#fff;transform:scaleY(0.9165);transform-origin:0 0;-webkit-text-stroke:0.45px #fff">Options</div>
<div class="t" id="l1" style="left:27.13px;top:1001.82px;font-size:13.538px;font-weight:normal;color:#fff;transform:scaleY(0.9307);transform-origin:0 0;-webkit-text-stroke:0.2px #fff">Line</div>
<div class="t" id="l2" style="left:26.19px;top:1030.42px;font-size:16.136px;font-weight:normal;color:#fff;transform:scaleY(0.9668);transform-origin:0 0;-webkit-text-stroke:0.2px #fff">Demo Device 1</div>
<div class="t" id="b1" style="left:422.78px;top:93.11px;font-size:17.002px;font-weight:bold;color:#fff;transform:scaleY(1.0352);transform-origin:0 0;-webkit-text-stroke:0.45px #fff">Cycle Exploration</div>
<div class="t" id="b2" style="left:304.34px;top:167.07px;font-size:18.282px;font-weight:normal;color:#fff;transform:scaleY(0.9299);transform-origin:0 0;-webkit-text-stroke:0.45px #fff">Components &amp; Variables</div>
<div class="t" id="b3" style="left:1017.18px;top:167.65px;font-size:16.646px;font-weight:bold;color:#fff;transform:scaleY(0.9792);transform-origin:0 0">Actual cycle selection</div>
<div class="t" id="b4" style="left:1656.06px;top:167.85px;font-size:17.004px;font-weight:bold;color:#fff;transform:scaleY(0.9586);transform-origin:0 0">Compared cycle selection</div>
<div class="t" id="ms1" style="left:1657.61px;top:82.94px;font-size:13.211px;font-weight:normal;color:#b3b9c2;transform:scaleY(0.8629);transform-origin:0 0">Machine Selection</div>
<div class="t" id="ms2" style="left:1656.93px;top:103.44px;font-size:16.844px;font-weight:normal;color:#717479;transform:scaleY(0.9143);transform-origin:0 0">Filler</div>
<div class="t" id="y1" style="left:345.86px;top:300.58px;font-size:12.727px;font-weight:normal;color:#222;transform:scaleY(1.1000);transform-origin:0 0">10.2k</div>
<div class="t" id="y2" style="left:341.11px;top:389.28px;font-size:12.161px;font-weight:normal;color:#222;transform:scaleY(1.1512);transform-origin:0 0">10.18k</div>
<div class="t" id="y3" style="left:341.11px;top:478.08px;font-size:12.161px;font-weight:normal;color:#222;transform:scaleY(1.1512);transform-origin:0 0">10.16k</div>
<div class="t" id="y4" style="left:341.11px;top:567.88px;font-size:12.161px;font-weight:normal;color:#222;transform:scaleY(1.1512);transform-origin:0 0">10.14k</div>
<div class="t" id="y5" style="left:341.11px;top:656.68px;font-size:12.161px;font-weight:normal;color:#222;transform:scaleY(1.1512);transform-origin:0 0">10.12k</div>
<div class="t" id="y6" style="left:349.83px;top:747.38px;font-size:11.136px;font-weight:normal;color:#222;transform:scaleY(1.2572);transform-origin:0 0">10.1k</div>
<div class="t" id="x1" style="left:559.58px;top:783.58px;font-size:14.265px;font-weight:normal;color:#222;transform:scaleY(0.9814);transform-origin:0 0">20:40:00.0</div>
<div class="t" id="x2" style="left:776.60px;top:783.58px;font-size:14.357px;font-weight:normal;color:#222;transform:scaleY(0.9751);transform-origin:0 0">20:50:00.0</div>
<div class="t" id="x3" style="left:995.74px;top:784.58px;font-size:13.408px;font-weight:normal;color:#222;transform:scaleY(1.0441);transform-origin:0 0">21:00:00.0</div>
<div class="t" id="x4" style="left:1214.58px;top:784.58px;font-size:12.625px;font-weight:normal;color:#222;transform:scaleY(1.1089);transform-origin:0 0">21:10:00.0</div>
<div class="t" id="x5" style="left:1430.86px;top:783.58px;font-size:13.228px;font-weight:normal;color:#222;transform:scaleY(1.0584);transform-origin:0 0">21:20:00.0</div>
<div class="t" id="x6" style="left:1647.01px;top:784.98px;font-size:13.487px;font-weight:normal;color:#222;transform:scaleY(1.0380);transform-origin:0 0">21:30:00.0</div>
<div class="t" id="lg1" style="left:423.04px;top:868.18px;font-size:15.190px;font-weight:normal;color:#333;transform:scaleY(0.9217);transform-origin:0 0">Actual line speed</div>
<div class="t" id="lg2" style="left:587.75px;top:868.18px;font-size:15.083px;font-weight:normal;color:#333;transform:scaleY(0.9282);transform-origin:0 0">Line speed set point</div>
<div class="t" id="h1" style="left:429.04px;top:991.86px;font-size:17.069px;font-weight:bold;color:#898989;transform:scaleY(0.9491);transform-origin:0 0;-webkit-text-stroke:0.35px #898989">Cycle Id</div>
<div class="t" id="h2" style="left:587.43px;top:991.86px;font-size:17.759px;font-weight:bold;color:#898989;transform:scaleY(0.9122);transform-origin:0 0;-webkit-text-stroke:0.35px #898989">Day</div>
<div class="t" id="h3" style="left:794.44px;top:991.86px;font-size:17.385px;font-weight:bold;color:#898989;transform:scaleY(0.9318);transform-origin:0 0;-webkit-text-stroke:0.35px #898989">Cycle start</div>
<div class="t" id="h4" style="left:1000.14px;top:991.86px;font-size:17.284px;font-weight:bold;color:#898989;transform:scaleY(0.9373);transform-origin:0 0;-webkit-text-stroke:0.35px #898989">Cycle end</div>
<div class="t" id="h5" style="left:1189.24px;top:991.86px;font-size:17.368px;font-weight:bold;color:#898989;transform:scaleY(0.9327);transform-origin:0 0;-webkit-text-stroke:0.35px #898989">Cycle duration</div>
<div class="t" id="h6" style="left:1454.28px;top:991.86px;font-size:18.459px;font-weight:bold;color:#898989;transform:scaleY(0.8776);transform-origin:0 0;-webkit-text-stroke:0.35px #898989">Material</div>
<div class="t" id="h7" style="left:1620.45px;top:991.86px;font-size:16.896px;font-weight:bold;color:#898989;transform:scaleY(0.9588);transform-origin:0 0;-webkit-text-stroke:0.35px #898989">Production code</div>
<div class="t" id="c1" style="left:297.97px;top:1033.88px;font-size:18.019px;font-weight:normal;color:#424242;transform:scaleY(0.8879);transform-origin:0 0">Actual</div>
<div class="t" id="c2" style="left:429.03px;top:1033.88px;font-size:17.813px;font-weight:normal;color:#424242;transform:scaleY(0.8982);transform-origin:0 0">9535</div>
<div class="t" id="c3" style="left:587.43px;top:1033.88px;font-size:17.580px;font-weight:normal;color:#424242;transform:scaleY(0.9101);transform-origin:0 0">2023-04-10</div>
<div class="t" id="c4" style="left:794.47px;top:1034.68px;font-size:16.689px;font-weight:normal;color:#424242;transform:scaleY(0.9587);transform-origin:0 0">20:33:50</div>
<div class="t" id="c5" style="left:1000.25px;top:1032.58px;font-size:15.164px;font-weight:normal;color:#424242;transform:scaleY(1.0551);transform-origin:0 0">21:33:40</div>
<div class="t" id="c6" style="left:1189.24px;top:1033.98px;font-size:17.056px;font-weight:normal;color:#424242;transform:scaleY(0.9381);transform-origin:0 0">00:59:50</div>
<div class="t" id="c7" style="left:1454.46px;top:1034.08px;font-size:14.778px;font-weight:normal;color:#424242;transform:scaleY(1.0827);transform-origin:0 0">MAT1</div>
<div class="t" id="c8" style="left:1620.50px;top:1032.58px;font-size:16.070px;font-weight:normal;color:#424242;transform:scaleY(0.9956);transform-origin:0 0">176406</div>
</body></html>
